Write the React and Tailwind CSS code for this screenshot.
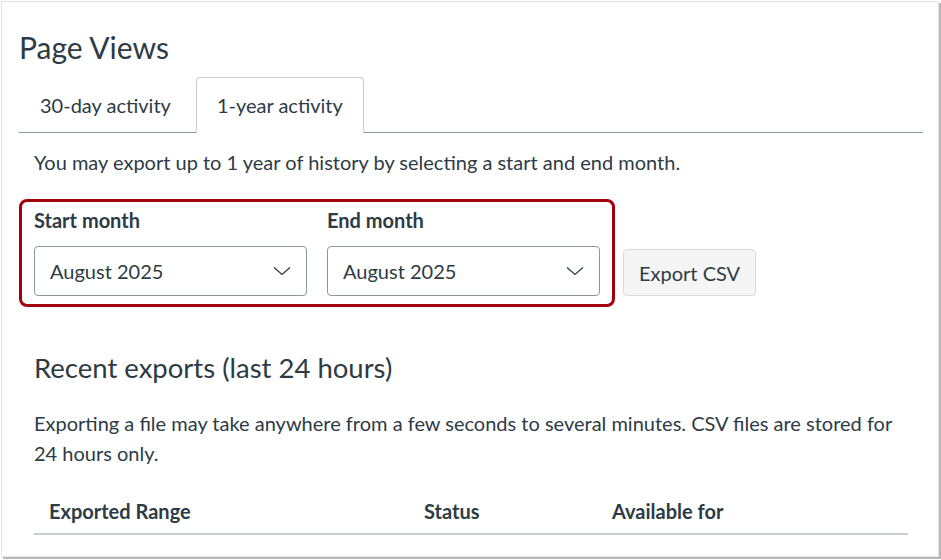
function MonthSelect({ value }) {
  return (
    <div className="flex h-[50px] w-[273px] items-center justify-between rounded-[4px] border border-[#8b969e] bg-white pl-[15px] pr-[15px]">
      <span>{value}</span>
      <svg width="18" height="10" viewBox="0 0 18 10" fill="none" className="text-[#2d3b45]">
        <path d="M1 1.5 L9 8.5 L17 1.5" stroke="currentColor" strokeWidth="1.3" />
      </svg>
    </div>
  );
}

export default function App() {
  return (
    <div className="h-[560px] w-[941px] bg-white" style={{ fontFamily: "Lato, 'Open Sans', sans-serif" }}>
      <div className="ml-[1px] mt-[1px] h-[556px] w-[938px] border border-[#e4e4e4] bg-white pl-[17px] pr-[15px] text-[#2d3b45] shadow-[2px_2px_0_#b8b8b8]">
        {/* ================= HEADER ================= */}
        <h1 className="mt-[25px] text-[30px] leading-[40px] font-normal">Page Views</h1>

        {/* ================= TABS ================= */}
        <div className="mt-[10px] flex border-b border-[#8b969e] text-[20px]">
          <div className="flex h-[55px] items-center pl-[21px] pr-[25px]">30-day activity</div>
          <div className="-mb-px flex h-[56px] items-center rounded-t-[4px] border border-b-0 border-[#c7cdd1] bg-white px-[20px] pb-[2px]">
            1-year activity
          </div>
        </div>

        {/* ================= PANEL ================= */}
        <div className="px-[15px] text-[20px]">
          <p className="mt-[16px] leading-[26px]">
            You may export up to 1 year of history by selecting a start and end month.
          </p>

          <div className="mt-[24px] -ml-[15px] flex items-end gap-[8px]">
            <div className="flex gap-[20px] rounded-[8px] border-[3px] border-[#a3000e] px-[12px] pt-[6px] pb-[8px]">
              <div>
                <div className="mb-[14px] font-bold leading-[24px]">Start month</div>
                <MonthSelect value="August 2025" />
              </div>
              <div>
                <div className="mb-[14px] font-bold leading-[24px]">End month</div>
                <MonthSelect value="August 2025" />
              </div>
            </div>
            <button className="mb-[11px] h-[47px] rounded-[4px] border border-[#d7dade] bg-[#f5f5f5] px-[15px] text-[#2d3b45]">
              Export CSV
            </button>
          </div>

          {/* ================= RECENT EXPORTS ================= */}
          <h2 className="mt-[44px] text-[27.5px] font-normal leading-[34px]">Recent exports (last 24 hours)</h2>
          <p className="mt-[23px] leading-[30px]">
            Exporting a file may take anywhere from a few seconds to several minutes. CSV files are stored for 24 hours
            only.
          </p>

          <div className="mt-[30px] flex border-b-2 border-[#c7cdd1] pb-[9px] font-bold leading-[26px]">
            <div className="w-[390px] pl-[15px]">Exported Range</div>
            <div className="w-[188px]">Status</div>
            <div>Available for</div>
          </div>
        </div>
      </div>
    </div>
  );
}
